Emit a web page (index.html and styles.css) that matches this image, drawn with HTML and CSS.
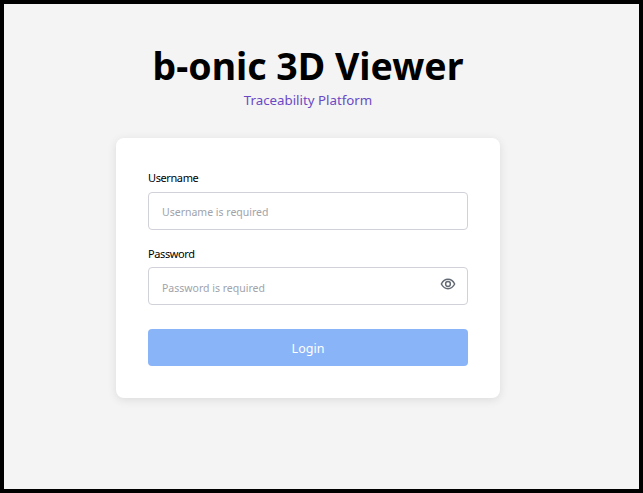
FILE: index.html
```html
<!DOCTYPE html>
<html lang="en">
<head>
    <meta charset="UTF-8">
    <meta name="viewport" content="width=device-width, initial-scale=1.0">
    <title>b-onic 3D Viewer</title>
    <link rel="stylesheet" href="styles.css">
</head>
<body>
    <div class="page">
        <header class="brand">
            <h1>b-onic 3D Viewer</h1>
            <p>Traceability Platform</p>
        </header>

        <form class="card">
            <div class="field">
                <label for="username">Username</label>
                <div class="input-box">
                    <input id="username" type="text" placeholder="Username is required">
                </div>
            </div>

            <div class="field field-password">
                <label for="password">Password</label>
                <div class="input-box">
                    <input id="password" type="password" placeholder="Password is required">
                    <svg class="eye" viewBox="0 0 24 24" width="16" height="16" fill="none" stroke="#646a73" stroke-width="2.2" stroke-linecap="round" stroke-linejoin="round">
                        <path d="M2 12s3.6-7 10-7 10 7 10 7-3.6 7-10 7-10-7-10-7z"/>
                        <circle cx="12" cy="12" r="3.6"/>
                    </svg>
                </div>
            </div>

            <button type="button" class="login-btn">Login</button>
        </form>
    </div>
</body>
</html>
```

FILE: styles.css
```css
* {
    box-sizing: border-box;
}

html, body {
    height: 100%;
}

body {
    margin: 0;
    font-family: "Noto Sans", "Open Sans", sans-serif;
    background-color: #000;
}

.page {
    height: 100%;
    border: 4px solid #000;
    background-color: #f4f4f4;
    padding: 38px 27px 0 0;
    display: flex;
    flex-direction: column;
    align-items: center;
}

.brand {
    text-align: center;
    margin-bottom: 28px;
}

.brand h1 {
    margin: 0;
    font-size: 37.5px;
    line-height: 48px;
    font-weight: 700;
    color: #000;
}

.brand p {
    margin: 0;
    font-size: 13.3px;
    line-height: 20px;
    color: #6a49c4;
}

.card {
    width: 384px;
    height: 260px;
    padding: 32px;
    background-color: #fff;
    border-radius: 8px;
    box-shadow: 0 2px 10px rgba(0, 0, 0, 0.1);
}

.field {
    margin-bottom: 16px;
}

.field label {
    display: block;
    font-size: 11px;
    letter-spacing: -0.4px;
    line-height: 16px;
    margin-bottom: 6px;
    color: #000;
}

.field-password label {
    margin-bottom: 5px;
}

.input-box {
    position: relative;
}

.input-box input {
    display: block;
    width: 100%;
    height: 38px;
    padding: 1px 13px 0;
    border: 1px solid #d1d1d9;
    border-radius: 4px;
    background-color: #fff;
    font-family: inherit;
    font-size: 10.5px;
    outline: none;
}

.field-password input {
    padding-top: 3px;
}

.input-box input::placeholder {
    color: #a0a3ab;
    opacity: 1;
}

.eye {
    position: absolute;
    top: 9px;
    right: 12px;
}

.login-btn {
    display: block;
    width: 100%;
    height: 37px;
    margin-top: 24px;
    padding-top: 3px;
    border: none;
    border-radius: 4px;
    background-color: #8ab4f8;
    color: #fff;
    font-family: inherit;
    font-size: 12.5px;
    cursor: pointer;
}
```
